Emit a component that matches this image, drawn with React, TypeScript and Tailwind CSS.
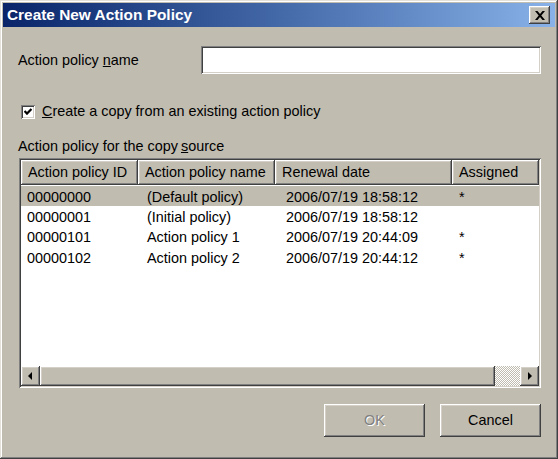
import React from "react";

const raised =
  "shadow-[inset_-1px_-1px_#404040,inset_1px_1px_#ffffff,inset_-2px_-2px_#808080,inset_2px_2px_#d4d0c8]";
const sunken =
  "shadow-[inset_1px_1px_#808080,inset_-1px_-1px_#ffffff,inset_2px_2px_#404040,inset_-2px_-2px_#d4d0c8]";

const rows = [
  { id: "00000000", name: "(Default policy)", date: "2006/07/19 18:58:12", assigned: "*" },
  { id: "00000001", name: "(Initial policy)", date: "2006/07/19 18:58:12", assigned: "" },
  { id: "00000101", name: "Action policy 1", date: "2006/07/19 20:44:09", assigned: "*" },
  { id: "00000102", name: "Action policy 2", date: "2006/07/19 20:44:12", assigned: "*" },
];

// column widths in px
const cols = ["w-[117px]", "w-[137px]", "w-[177px]", "flex-1"];

function HeaderCell({ label, className }: { label: string; className: string }) {
  return (
    <div className={`${className} h-full flex items-center pl-[7px] pt-[1px] overflow-hidden whitespace-nowrap ${raised}`}>
      {label}
    </div>
  );
}

function Arrow({ dir }: { dir: "left" | "right" }) {
  return (
    <div className={`w-[19px] h-full flex items-center justify-center bg-[#c0bcb0] ${raised}`}>
      <svg width="5" height="8" viewBox="0 0 5 8">
        {dir === "left" ? <polygon points="4,0 4,8 0,4" fill="#000" /> : <polygon points="1,0 1,8 5,4" fill="#000" />}
      </svg>
    </div>
  );
}

function Button({ label, disabled }: { label: string; disabled?: boolean }) {
  return (
    <div
      className={`w-[101px] h-[33px] flex items-center justify-center bg-[#c0bcb0] ${raised} ${
        disabled ? "text-[#808080] [text-shadow:1px_1px_0_#ffffff]" : "text-black"
      }`}
    >
      {label}
    </div>
  );
}

export default function App() {
  return (
    <div
      className="w-[558px] h-[459px] bg-[#c0bcb0] flex flex-col p-[3px] text-[14.4px] text-black shadow-[inset_-1px_-1px_#404040,inset_1px_1px_#e4e1da,inset_-2px_-2px_#808080,inset_2px_2px_#ffffff]"
      style={{ fontFamily: '"Liberation Sans", Arial, sans-serif' }}
    >
      {/* title bar */}
      <div className="h-[24px] flex items-center justify-between pl-[4px] pr-[5px] bg-gradient-to-r from-[#0a246a] to-[#88b2e8]">
        <span className="text-white font-bold text-[15.4px]">Create New Action Policy</span>
        <div className={`w-[21px] h-[18px] flex items-center justify-center bg-[#c0bcb0] ${raised}`}>
          <svg width="10" height="9" viewBox="0 0 10 9">
            <path d="M0 0h2.5l2.5 2.9L7.5 0H10L6.3 4.5 10 9H7.5L5 6.1 2.5 9H0l3.7-4.5z" fill="#000" />
          </svg>
        </div>
      </div>

      <div className="flex flex-col pl-[15px] pr-[14px]">
        {/* name row */}
        <div className="mt-[19px] h-[28px] flex items-center">
          <span className="w-[183px] pt-[2px]">
            Action policy <span className="underline">n</span>ame
          </span>
          <div className={`flex-1 h-full bg-white ${sunken}`} />
        </div>

        {/* checkbox */}
        <div className="mt-[29px] h-[17px] flex items-center pl-[3px]">
          <div className={`w-[14px] h-[14px] bg-white flex items-center justify-center ${sunken}`}>
            <svg width="8" height="7" viewBox="0 0 8 7">
              <path d="M0.5 3l2.5 2.6L7.5 1" stroke="#000" strokeWidth="2.2" fill="none" />
            </svg>
          </div>
          <span className="ml-[7px] pt-[1px]">
            <span className="underline">C</span>reate a copy from an existing action policy
          </span>
        </div>

        <div className="mt-[18px] h-[16px] flex items-center pt-[1px]">
          Action policy for the copy <span className="underline ml-[3px]">s</span>ource
        </div>

        {/* list view */}
        <div className={`mt-[4px] ml-[1px] h-[230px] bg-white p-[2px] flex flex-col ${sunken}`}>
          <div className="h-[25px] flex bg-[#c0bcb0] shrink-0">
            <HeaderCell label="Action policy ID" className={cols[0]} />
            <HeaderCell label="Action policy name" className={cols[1]} />
            <HeaderCell label="Renewal date" className={cols[2]} />
            <HeaderCell label="Assigned" className={cols[3]} />
          </div>
          <div className="flex-1 flex flex-col pt-[1px]">
            {rows.map((r, i) => (
              <div key={r.id} className={`h-[20.3px] flex items-center pt-[3px] ${i === 0 ? "bg-[#c0bcb0]" : ""}`}>
                <div className={`${cols[0]} pl-[6px]`}>{r.id}</div>
                <div className={`${cols[1]} pl-[9px]`}>{r.name}</div>
                <div className={`${cols[2]} pl-[11px]`}>{r.date}</div>
                <div className={`${cols[3]} pl-[7px]`}>{r.assigned}</div>
              </div>
            ))}
          </div>
          {/* horizontal scrollbar */}
          <div className="h-[20px] flex shrink-0 bg-[#c0bcb0]">
            <Arrow dir="left" />
            <div className={`w-[455px] h-full bg-[#c0bcb0] ${raised}`} />
            <div className="flex-1 h-full bg-[repeating-conic-gradient(#ffffff_0_25%,#c0bcb0_0_50%)] bg-[length:2px_2px]" />
            <Arrow dir="right" />
          </div>
        </div>

        {/* buttons */}
        <div className="mt-[16px] flex justify-end gap-[15px]">
          <Button label="OK" disabled />
          <Button label="Cancel" />
        </div>
      </div>
    </div>
  );
}
